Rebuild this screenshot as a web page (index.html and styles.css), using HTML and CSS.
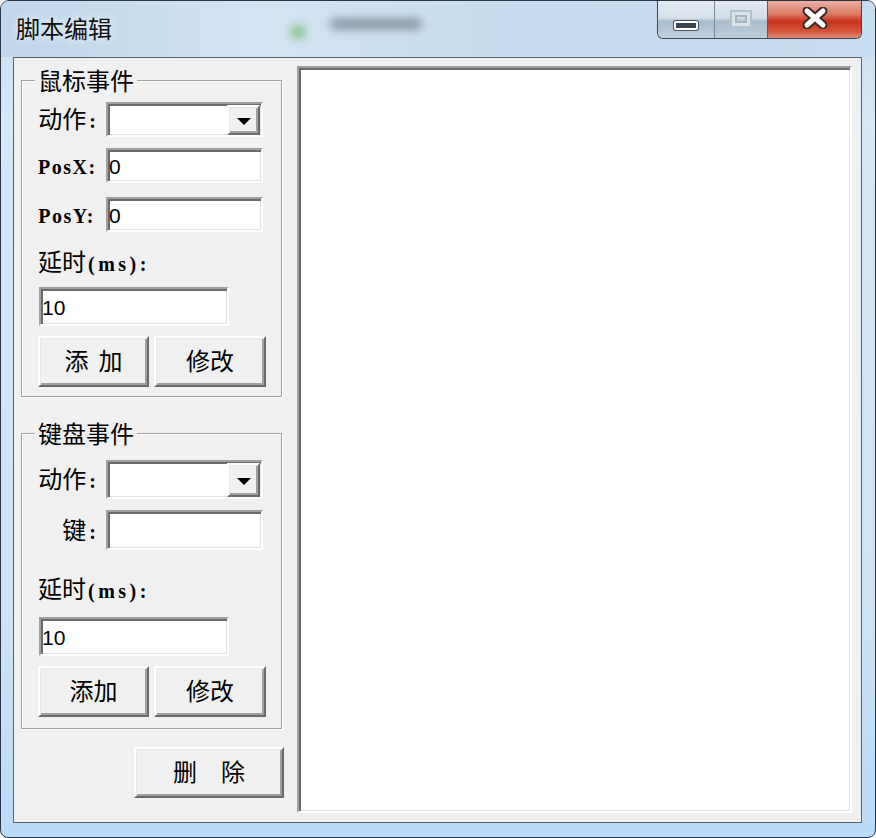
FILE: index.html
```html
<!DOCTYPE html>
<html lang="zh">
<head>
<meta charset="utf-8">
<title>脚本编辑</title>
<link rel="stylesheet" href="styles.css">
</head>
<body>
<div class="window">
  <div class="titlebar">
    <div class="title-left">
      <span class="title">脚本编辑</span>
      <span class="ghost-dot"></span>
      <span class="ghost-text"></span>
    </div>
    <div class="caption">
      <div class="cap-btn cap-min"><span class="min-glyph"></span></div>
      <div class="cap-btn cap-max"><span class="max-glyph"></span></div>
      <div class="cap-btn cap-close">
        <svg width="28" height="22" viewBox="0 0 28 22">
          <path d="M6 4 L22 18 M22 4 L6 18" stroke="#3a2a28" stroke-width="9" stroke-linecap="round"/>
          <path d="M6 4 L22 18 M22 4 L6 18" stroke="#ffffff" stroke-width="5" stroke-linecap="round"/>
        </svg>
      </div>
    </div>
  </div>
  <div class="client">
    <div class="left-col">
      <fieldset class="group g1">
        <legend>鼠标事件</legend>
        <div class="form-row r-combo1">
          <span class="lbl">动作<span class="colon">:</span></span>
          <div class="combo sunken"><div class="drop raised"><span class="tri"></span></div></div>
        </div>
        <div class="form-row r-posx">
          <span class="lbl mono">PosX:</span>
          <div class="edit sunken h35"><span class="val">0</span></div>
        </div>
        <div class="form-row r-posy">
          <span class="lbl mono">PosY:</span>
          <div class="edit sunken h35"><span class="val">0</span></div>
        </div>
        <div class="delay-lbl d1">延时<span class="mono">(ms):</span></div>
        <div class="edit sunken delay"><span class="val">10</span></div>
        <div class="btn-row">
          <div class="btn raised">添<span class="sp"></span>加</div>
          <div class="btn raised">修改</div>
        </div>
      </fieldset>

      <fieldset class="group g2">
        <legend>键盘事件</legend>
        <div class="form-row r-combo2">
          <span class="lbl">动作<span class="colon">:</span></span>
          <div class="combo sunken wide"><div class="drop raised"><span class="tri"></span></div></div>
        </div>
        <div class="form-row r-key">
          <span class="lbl">键<span class="colon">:</span></span>
          <div class="edit sunken h40"></div>
        </div>
        <div class="delay-lbl d2">延时<span class="mono">(ms):</span></div>
        <div class="edit sunken delay d2box"><span class="val">10</span></div>
        <div class="btn-row">
          <div class="btn raised">添加</div>
          <div class="btn raised">修改</div>
        </div>
      </fieldset>

      <div class="del-row">
        <div class="btn raised del">删　除</div>
      </div>
    </div>
    <div class="listbox sunken"></div>
  </div>
</div>
</body>
</html>
```

FILE: styles.css
```css
* { box-sizing: border-box; }

html, body {
  margin: 0;
  padding: 0;
  background: #ffffff;
}

body {
  font-family: "Noto Sans CJK SC", "Noto Sans", sans-serif;
  color: #000;
}

.window {
  width: 876px;
  height: 838px;
  display: flex;
  flex-direction: column;
  border: 1px solid #2a3644;
  border-radius: 9px 9px 8px 8px;
  overflow: hidden;
  background: linear-gradient(to bottom, #bcd3ea 0px, #cfe1f2 40px, #d6e7f6 120px, #cfe3f5 600px, #b9daf8 100%);
}

/* ---------- title bar ---------- */
.titlebar {
  height: 56px;
  flex: none;
  display: flex;
  justify-content: space-between;
  align-items: flex-start;
  background: linear-gradient(to right, #c0d6ec 0%, #d3e4f3 30%, #c6dbef 60%, #c8ddf0 100%);
}

.title-left {
  display: flex;
  align-items: center;
  height: 56px;
  padding-left: 15px;
}

.title {
  font-size: 24px;
  line-height: 30px;
  margin-top: -2px;
  color: #101010;
  text-shadow: 0 0 8px rgba(255,255,255,0.9);
}

.ghost-dot {
  width: 16px;
  height: 14px;
  margin-left: 178px;
  margin-top: 6px;
  border-radius: 50%;
  background: #6fb35e;
  filter: blur(4px);
  opacity: 0.7;
}

.ghost-text {
  width: 92px;
  height: 12px;
  margin-left: 24px;
  margin-top: -10px;
  border-radius: 4px;
  background: #5c6470;
  filter: blur(4px);
  opacity: 0.55;
}

.caption {
  display: flex;
  margin-right: 13px;
  height: 38px;
  border: 1px solid #3a4656;
  border-top: none;
  border-radius: 0 0 6px 6px;
  overflow: hidden;
}

.cap-btn {
  height: 100%;
  display: flex;
  align-items: center;
  justify-content: center;
}

.cap-min {
  width: 57px;
  border-right: 1px solid #7a8898;
  background: linear-gradient(to bottom, #e4ecf3 0%, #d5e0ea 45%, #a9bccd 55%, #bfd0df 100%);
  padding-top: 12px;
}

.min-glyph {
  width: 24px;
  height: 9px;
  border-radius: 2px;
  background: #3a4350;
  border: 2px solid #ffffff;
  box-shadow: 0 0 0 1px #4a5563;
}

.cap-max {
  width: 53px;
  border-right: 1px solid #8a4a40;
  background: linear-gradient(to bottom, #e2eaf1 0%, #d3dee8 45%, #abbdcd 55%, #bccdda 100%);
  padding-bottom: 2px;
}

.max-glyph {
  width: 22px;
  height: 18px;
  border: 2px solid #b4c2cf;
  box-shadow: inset 0 0 0 3px #dbe3ea, inset 0 0 0 5px #a8b6c3;
}

.cap-close {
  width: 93px;
  background: linear-gradient(to bottom, #eab0a3 0%, #dc7a66 35%, #c8331c 55%, #d45238 80%, #e48a74 100%);
  padding-bottom: 4px;
}

/* ---------- client area ---------- */
.client {
  flex: 1;
  margin: 0 13px 14px 12px;
  border: 1px solid #56646f;
  background: #f0f0f0;
  display: flex;
  gap: 13px;
  padding: 8px 9px 9px 7px;
}

.left-col {
  width: 263px;
  flex: none;
  display: flex;
  flex-direction: column;
}

.listbox {
  flex: 1;
}

/* 3D borders */
.sunken {
  background: #ffffff;
  border: 2px solid;
  border-color: #a0a0a0 #ffffff #ffffff #a0a0a0;
  box-shadow: inset 2px 2px 0 #6a6a6a, inset -1px -1px 0 #e3e3e3;
}

.raised {
  background: #f0f0f0;
  border: 2px solid;
  border-color: #ffffff #6a6a6a #6a6a6a #ffffff;
  box-shadow: inset 1px 1px 0 #e8e8e8, inset -2px -2px 0 #a0a0a0;
}

/* group boxes */
.group {
  width: 261px;
  margin: 0;
  border: 1px solid #a0a0a0;
  box-shadow: inset 1px 1px 0 #ffffff, 1px 1px 0 #ffffff;
  padding: 0 18px 0 16px;
  min-width: 0;
}

.group legend {
  font-size: 24px;
  line-height: 24px;
  height: 24px;
  padding: 0 3px;
  margin-left: -3px;
  background: #f0f0f0;
}

.g1 {
  margin-top: 2px;
  padding-bottom: 9px;
}

.g2 {
  margin-top: 24px;
  padding-bottom: 11px;
}

.form-row {
  display: flex;
  align-items: center;
  gap: 10px;
}

.lbl {
  width: 58px;
  flex: none;
  text-align: right;
  font-size: 24px;
  line-height: 28px;
  white-space: nowrap;
}

.colon {
  font-family: "Liberation Serif", serif;
  font-weight: bold;
  font-size: 20px;
  padding-left: 3px;
}

.mono {
  font-family: "Liberation Serif", "DejaVu Serif", serif;
  font-weight: bold;
  font-size: 20px;
  letter-spacing: 1.5px;
}

.lbl.mono {
  padding-top: 2px;
  padding-right: 1px;
}

.r-combo1 { margin-top: 10px; }
.r-posx { margin-top: 11px; }
.r-posy { margin-top: 14px; }

.r-combo2 { margin-top: 15px; }
.r-key { margin-top: 11px; }

.combo {
  width: 157px;
  height: 35px;
  display: flex;
  justify-content: flex-end;
  padding: 1px 1px 0 0;
}

.r-combo2 .combo {
  height: 39px;
}

.combo.wide {
  width: 160px;
}

.drop {
  width: 33px;
  height: 100%;
  display: flex;
  align-items: center;
  justify-content: center;
}

.tri {
  width: 0;
  height: 0;
  border-left: 7px solid transparent;
  border-right: 7px solid transparent;
  border-top: 7px solid #000;
  margin-top: 2px;
}

.edit {
  width: 157px;
  display: flex;
  align-items: center;
  padding-left: 1px;
}

.h35 { height: 35px; }
.h40 { height: 40px; }

.val {
  font-family: "Liberation Sans", Arial, sans-serif;
  font-size: 21px;
  line-height: 24px;
  padding-top: 2px;
}

.delay-lbl {
  font-size: 24px;
  line-height: 30px;
  height: 30px;
  white-space: nowrap;
}

.delay-lbl .mono {
  padding-left: 2px;
  letter-spacing: 3.5px;
}

.d1 { margin-top: 14px; }
.d2 { margin-top: 23px; }

.edit.delay {
  width: 190px;
  height: 39px;
  margin-top: 11px;
  margin-left: 1px;
}

.edit.d2box {
  margin-top: 14px;
}

.btn-row {
  display: flex;
  gap: 5px;
  margin-top: 10px;
}

.btn {
  height: 51px;
  flex: none;
  display: flex;
  align-items: center;
  justify-content: center;
  font-size: 24px;
  line-height: 28px;
  padding-bottom: 3px;
}

.btn-row .btn:first-child { width: 111px; }
.btn-row .btn:last-child { width: 112px; }

.sp {
  display: inline-block;
  width: 10px;
}

.del-row {
  display: flex;
  justify-content: flex-end;
  margin-top: 18px;
}

.btn.del {
  width: 150px;
}
```
